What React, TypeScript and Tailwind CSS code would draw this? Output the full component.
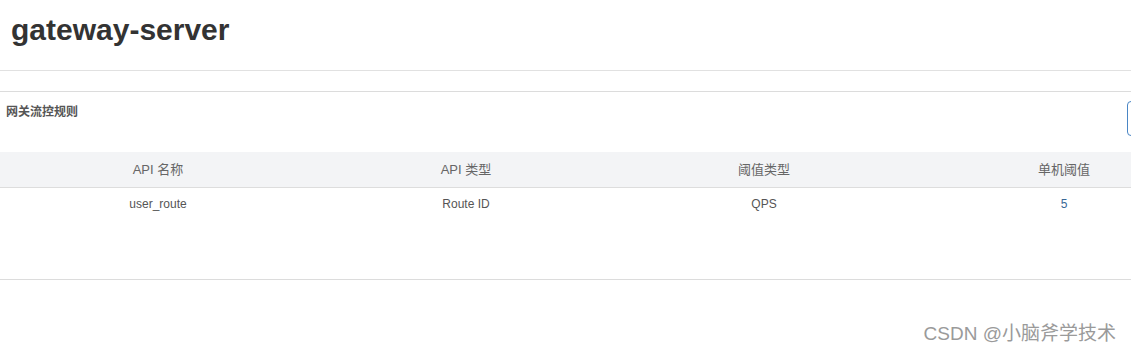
import React from "react";

const rules = [
  { name: "user_route", type: "Route ID", grade: "QPS", count: "5" },
];

export default function App() {
  return (
    <div
      className="relative w-[1131px] h-[354px] overflow-hidden bg-white text-[#555]"
      style={{ fontFamily: '"Liberation Sans", Arial, "Noto Sans CJK SC", sans-serif' }}
    >
      {/* page title */}
      <div className="h-[71px] border-b border-[#e1e1e1] pl-[11px] pt-[12px]">
        <h1 className="text-[30px] leading-[36px] font-bold text-[#333]">gateway-server</h1>
      </div>

      {/* rules panel */}
      <div className="mt-[20px] border-t border-[#dcdcdc]">
        <div className="flex items-start justify-between h-[60px]">
          <span className="pl-[6px] pt-[12px] text-[12px] leading-[16px] font-bold text-[#555]">
            网关流控规则
          </span>
          <div className="mt-[9px] w-[30px] h-[35px] -mr-[26px] rounded-[4px] border border-[#4a86c5] bg-white" />
        </div>

        <div className="w-[1216px]">
          <div className="grid grid-cols-[316px_300px_296px_304px] h-[36px] items-center bg-[#f3f4f6] border-b border-[#dddddd] text-[13px] text-[#666]">
            <div className="text-center">API 名称</div>
            <div className="text-center">API 类型</div>
            <div className="text-center">阈值类型</div>
            <div className="text-center">单机阈值</div>
          </div>
          {rules.map((r) => (
            <div
              key={r.name}
              className="grid grid-cols-[316px_300px_296px_304px] h-[32px] items-center text-[12px] text-[#555]"
            >
              <div className="text-center">{r.name}</div>
              <div className="text-center">{r.type}</div>
              <div className="text-center">{r.grade}</div>
              <div className="text-center text-[#3a6796]">{r.count}</div>
            </div>
          ))}
        </div>
        <div className="mt-[59px] border-t border-[#dcdcdc]" />
      </div>

      <div className="absolute right-[15px] top-[322px] text-[19px] leading-[24px] text-[#9a9a9a]">
        CSDN @小脑斧学技术
      </div>
    </div>
  );
}
